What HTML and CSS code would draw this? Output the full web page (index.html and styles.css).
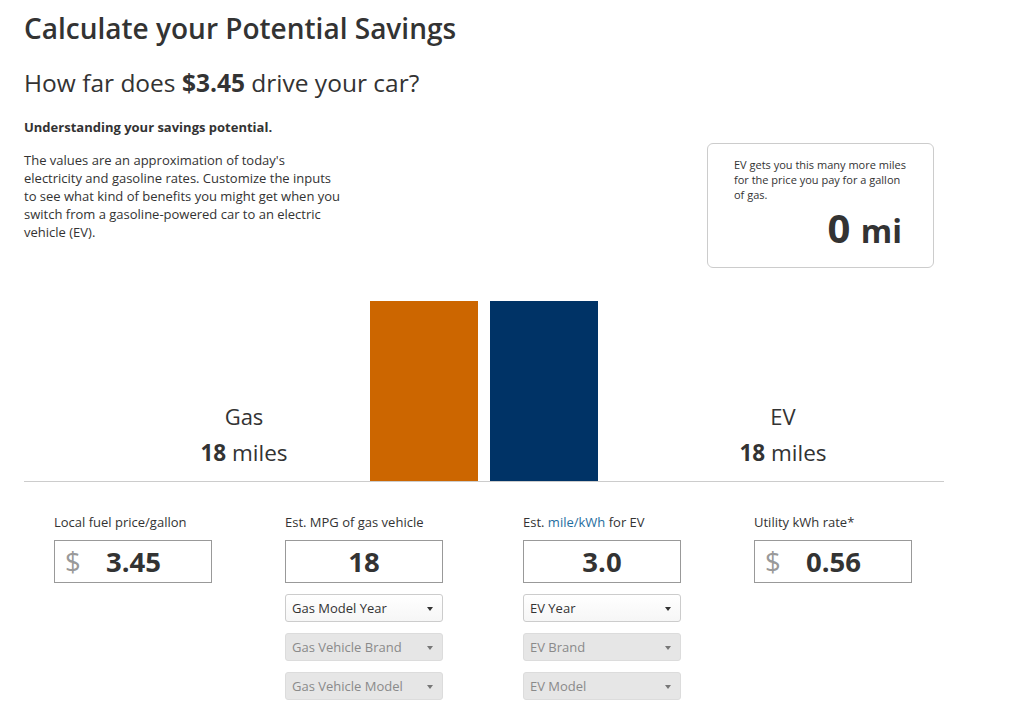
FILE: index.html
```html
<!DOCTYPE html>
<html lang="en">
<head>
    <meta charset="UTF-8">
    <title>Calculate your Potential Savings</title>
    <link rel="stylesheet" href="styles.css">
</head>
<body>
    <div class="calc">
        <h1>Calculate your Potential Savings</h1>
        <h2>How far does <strong>$3.45</strong> drive your car?</h2>

        <div class="intro">
            <div class="intro-text">
                <h3>Understanding your savings potential.</h3>
                <p>The values are an approximation of today's electricity and gasoline rates. Customize the inputs to see what kind of benefits you might get when you switch from a gasoline-powered car to an electric vehicle (EV).</p>
            </div>
            <div class="result-box">
                <p>EV gets you this many more miles for the price you pay for a gallon of gas.</p>
                <div class="result-num">0 <span>mi</span></div>
            </div>
        </div>

        <div class="chart">
            <div class="side gas-side">
                <div class="side-name">Gas</div>
                <div class="side-miles"><strong>18</strong> miles</div>
            </div>
            <div class="bar bar-gas" style="height: 180px;"></div>
            <div class="bar bar-ev" style="height: 180px;"></div>
            <div class="side ev-side">
                <div class="side-name">EV</div>
                <div class="side-miles"><strong>18</strong> miles</div>
            </div>
        </div>

        <div class="inputs">
            <div class="field">
                <label>Local fuel price/gallon</label>
                <div class="num-input money"><span class="cur">$</span><span class="val">3.45</span></div>
            </div>
            <div class="field">
                <label>Est. MPG of gas vehicle</label>
                <div class="num-input"><span class="val">18</span></div>
                <div class="select">Gas Model Year</div>
                <div class="select disabled">Gas Vehicle Brand</div>
                <div class="select disabled">Gas Vehicle Model</div>
            </div>
            <div class="field">
                <label>Est. <a href="#">mile/kWh</a> for EV</label>
                <div class="num-input"><span class="val">3.0</span></div>
                <div class="select">EV Year</div>
                <div class="select disabled">EV Brand</div>
                <div class="select disabled">EV Model</div>
            </div>
            <div class="field">
                <label>Utility kWh rate*</label>
                <div class="num-input money"><span class="cur">$</span><span class="val">0.56</span></div>
            </div>
        </div>
    </div>
</body>
</html>
```

FILE: styles.css
```css
* {
    margin: 0;
    padding: 0;
    box-sizing: border-box;
}
body {
    font-family: "Open Sans", Arial, sans-serif;
    color: #333;
    background: #fff;
}
.calc {
    width: 920px;
    margin-left: 24px;
    padding-top: 10px;
}
h1 {
    font-size: 28px;
    font-weight: 600;
    line-height: 36px;
}
h2 {
    font-size: 24.5px;
    font-weight: 400;
    line-height: 32px;
    margin-top: 21px;
}
h2 strong {
    font-weight: 700;
}

/* intro text + result box */
.intro {
    display: flex;
    justify-content: space-between;
    align-items: flex-start;
}
.intro-text {
    width: 322px;
    margin-top: 19px;
}
.intro-text h3 {
    font-size: 13px;
    font-weight: 700;
    line-height: 18px;
}
.intro-text p {
    font-size: 13px;
    line-height: 18px;
    margin-top: 15px;
}
.result-box {
    width: 227px;
    height: 125px;
    margin-top: 44px;
    margin-right: 10px;
    border: 1px solid #ccc;
    border-radius: 6px;
    padding: 13px 22px 0 26px;
}
.result-box p {
    font-size: 11px;
    line-height: 15px;
}
.result-num {
    text-align: right;
    font-size: 40px;
    font-weight: 700;
    line-height: 44px;
    margin-top: 4px;
    padding-right: 9px;
}
.result-num span {
    font-size: 32px;
}

/* bar chart */
.chart {
    display: flex;
    align-items: flex-end;
    margin-top: 33px;
    border-bottom: 1px solid #ccc;
}
.bar {
    width: 108px;
}
.bar-gas {
    background: #cc6600;
}
.bar-ev {
    background: #003366;
    margin-left: 12px;
}
.side {
    width: 200px;
    text-align: center;
    padding-bottom: 13px;
}
.gas-side {
    margin-left: 120px;
    margin-right: 26px;
}
.ev-side {
    margin-left: 85px;
}
.side-name {
    font-size: 22px;
    line-height: 28px;
}
.side-miles {
    font-size: 22.5px;
    line-height: 30px;
    margin-top: 8px;
}
.side-miles strong {
    font-weight: 700;
}

/* inputs */
.inputs {
    display: grid;
    grid-template-columns: 231px 238px 231px 1fr;
    padding-left: 30px;
    margin-top: 31px;
}
.field label {
    display: block;
    font-size: 13px;
    line-height: 18px;
    margin-bottom: 9px;
}
.field label a {
    color: #1f6ea0;
    text-decoration: none;
}
.num-input {
    width: 158px;
    height: 43px;
    border: 1px solid #999;
    display: flex;
    align-items: center;
    justify-content: center;
    font-size: 27.5px;
    font-weight: 700;
}
.num-input.money {
    justify-content: flex-start;
    padding-left: 10px;
}
.num-input .cur {
    color: #999;
    font-weight: 400;
    width: 41px;
}
.select {
    position: relative;
    width: 158px;
    height: 28px;
    margin-top: 11px;
    border: 1px solid #ccc;
    border-radius: 3px;
    background: linear-gradient(#fff, #f6f6f6);
    font-size: 13px;
    line-height: 26px;
    padding-left: 6px;
}
.select::after {
    content: "";
    position: absolute;
    right: 9px;
    top: 12px;
    border-left: 3.5px solid transparent;
    border-right: 3.5px solid transparent;
    border-top: 4px solid #333;
}
.select.disabled {
    background: #e6e6e6;
    border-color: #dcdcdc;
    color: #8a8a8a;
}
.select.disabled::after {
    border-top-color: #777;
}
```
